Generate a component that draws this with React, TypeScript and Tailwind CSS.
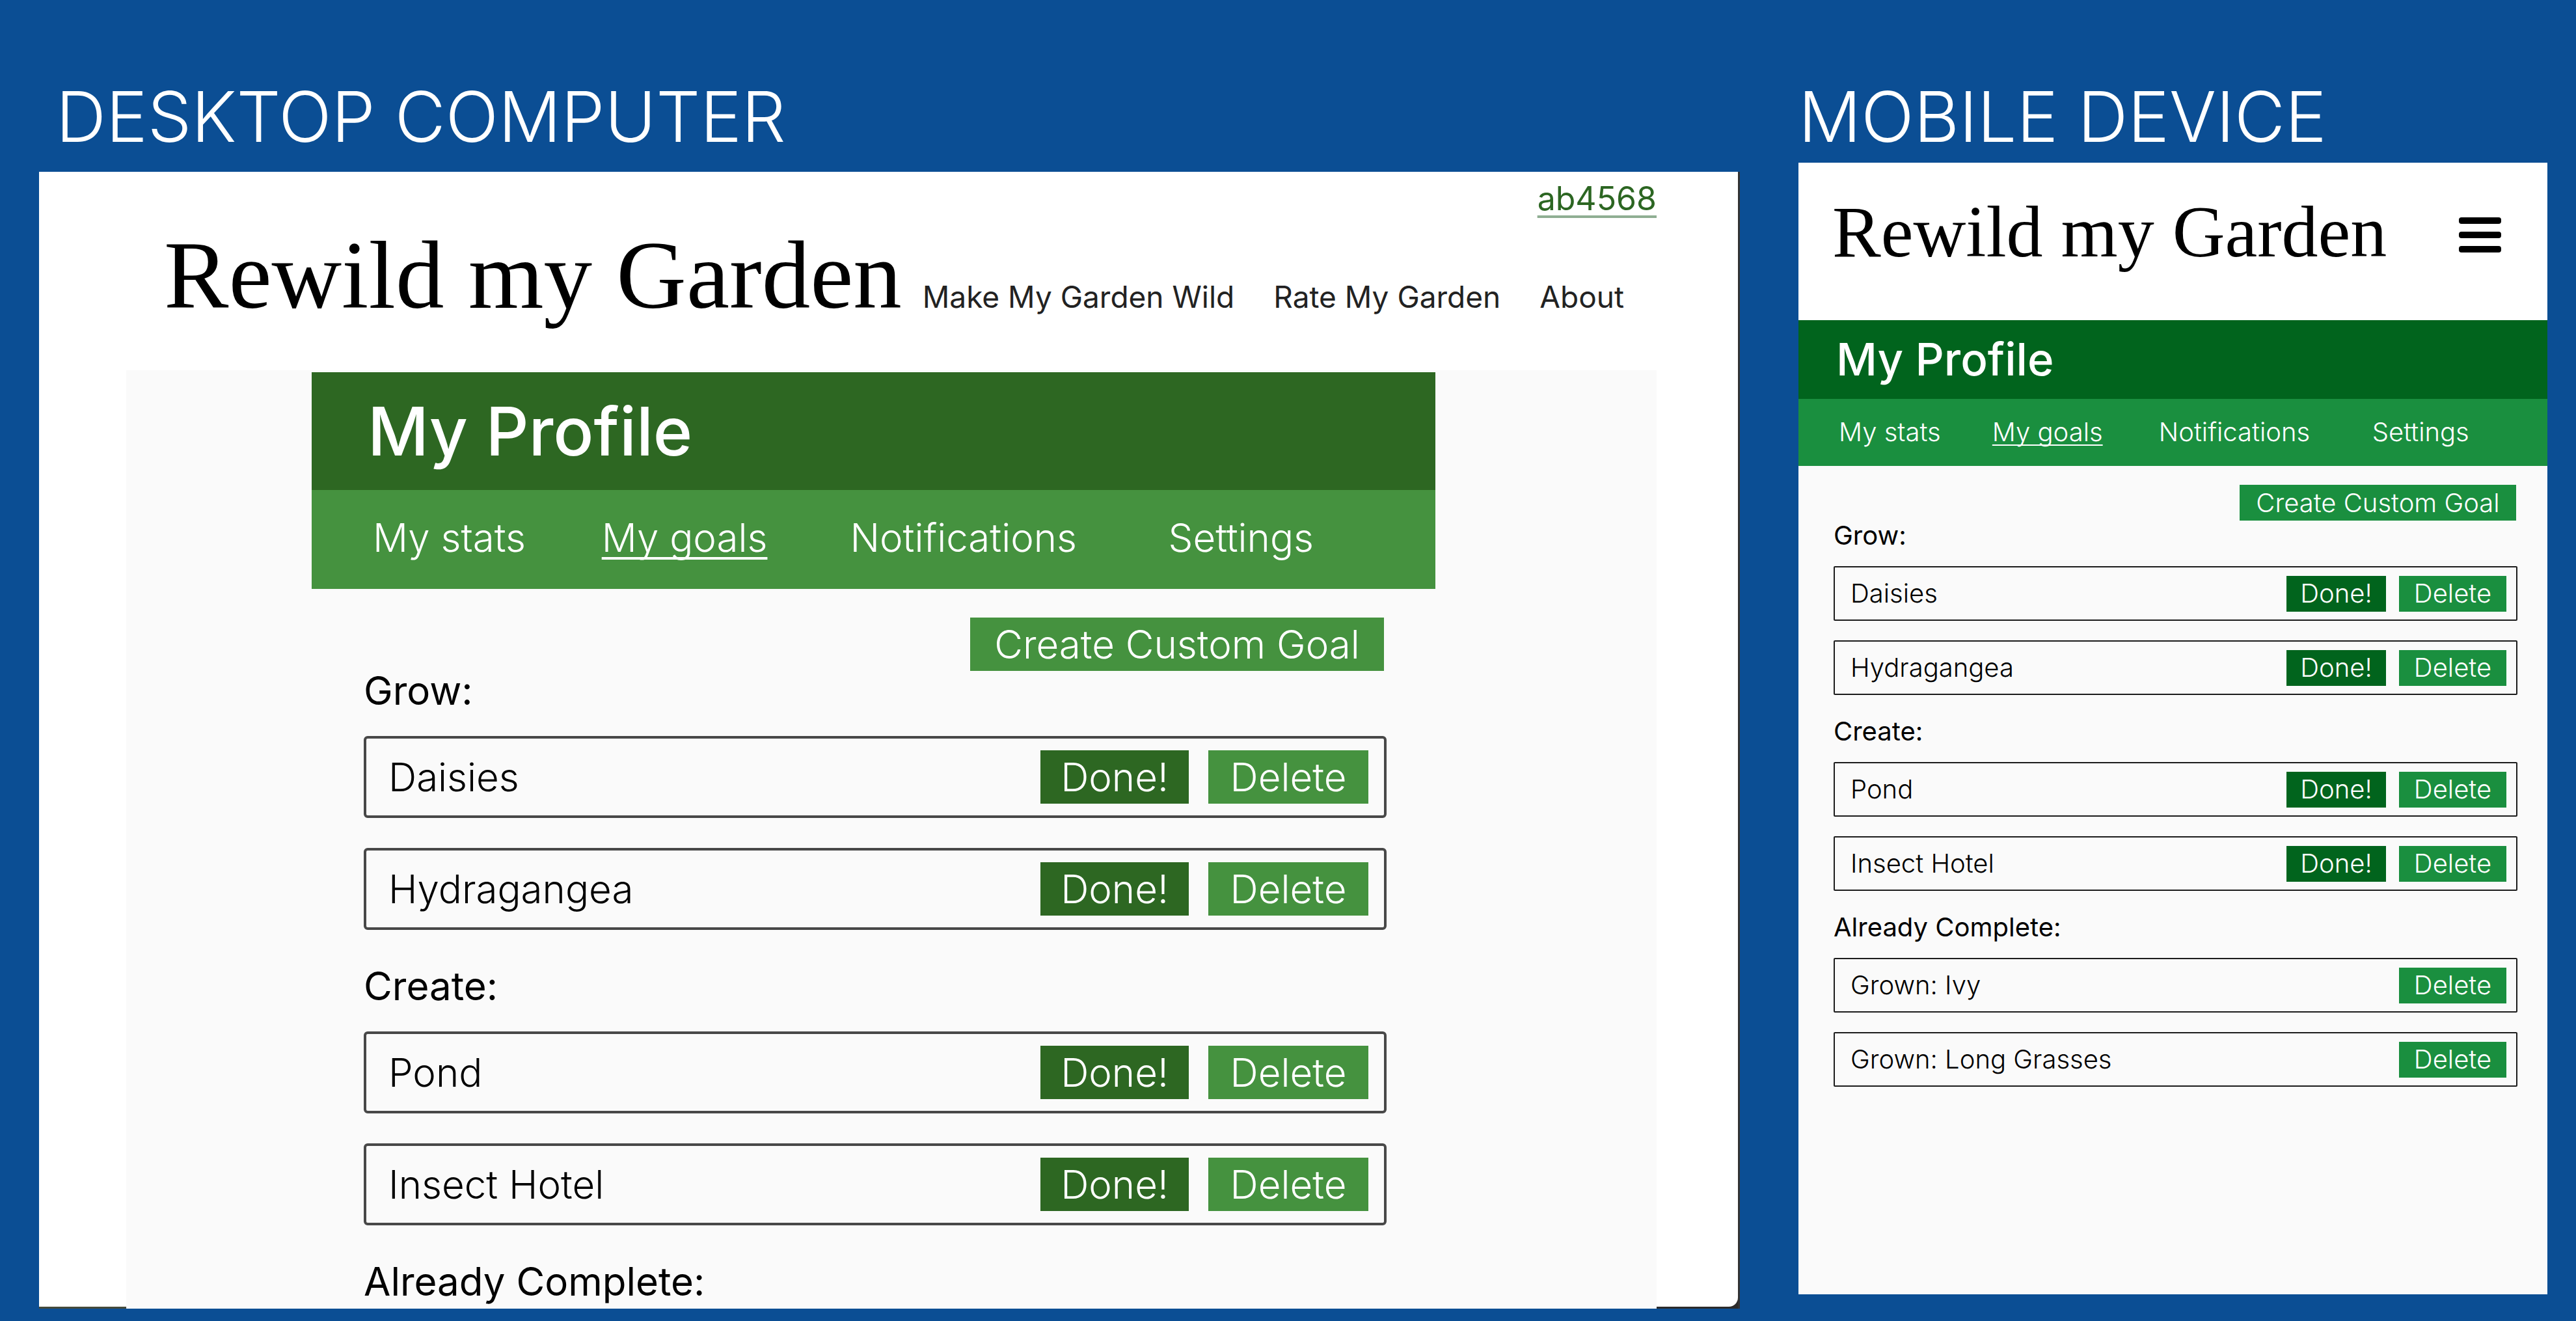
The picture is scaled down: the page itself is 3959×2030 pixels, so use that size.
import { useState } from "react";

type Goal = { name: string; complete?: boolean };
type GoalGroup = { title: string; goals: Goal[] };
type Size = "desktop" | "mobile";

const groups: GoalGroup[] = [
  { title: "Grow:", goals: [{ name: "Daisies" }, { name: "Hydragangea" }] },
  { title: "Create:", goals: [{ name: "Pond" }, { name: "Insect Hotel" }] },
];

const completed: GoalGroup = {
  title: "Already Complete:",
  goals: [
    { name: "Grown: Ivy", complete: true },
    { name: "Grown: Long Grasses", complete: true },
  ],
};

const tabs = ["My stats", "My goals", "Notifications", "Settings"];

const styles = {
  desktop: {
    title: "bg-[#2d6722] py-[30px] pl-[86px] text-[103px] leading-[121px]",
    tabs: "bg-[#45923f] pt-[43px] pb-[49px] pl-[94px] pr-[170px] text-[60px] leading-[60px]",
    underline: "underline decoration-4 underline-offset-8 [text-decoration-skip-ink:none]",
    body: "pl-[80px] pr-[75px] pt-11 pb-3 text-[60px] leading-[60px]",
    create: "mr-1 h-[82px] w-[636px] bg-[#45923f]",
    groups: "gap-14",
    group: "gap-10",
    rows: "gap-[46px]",
    row: "h-[126px] rounded-[6px] border-4 border-[#484848] pl-[34px] pr-6",
    actions: "gap-[30px]",
    done: "h-[82px] w-[228px] bg-[#2d6722]",
    remove: "h-[82px] w-[246px] bg-[#45923f]",
  },
  mobile: {
    title: "bg-[#01641d] py-5 pl-[58px] text-[69px] leading-[81px]",
    tabs: "bg-[#1a8f3f] pt-[31px] pb-8 pl-[62px] pr-[108px] text-[40px] leading-[40px]",
    underline: "underline decoration-2 underline-offset-[5px] [text-decoration-skip-ink:none]",
    body: "pl-[54px] pr-[46px] pt-[29px] text-[40px] leading-[40px]",
    create: "mr-0.5 mb-[3px] h-[55px] w-[425px] bg-[#1a8f3f]",
    groups: "gap-9",
    group: "gap-[27px]",
    rows: "gap-[30px]",
    row: "h-[84px] rounded-[2px] border-2 border-[#1c1c1c] pl-6 pr-[15px]",
    actions: "gap-5",
    done: "h-[55px] w-[153px] bg-[#01641d]",
    remove: "h-[55px] w-[165px] bg-[#1a8f3f]",
  },
};

function Profile({ size, groups }: { size: Size; groups: GoalGroup[] }) {
  const s = styles[size];
  const [active, setActive] = useState("My goals");
  return (
    <section>
      <h2 className={`font-medium text-white ${s.title}`}>My Profile</h2>
      <nav className={`grid grid-cols-[351fr_381fr_488fr_240fr] font-light whitespace-nowrap text-white ${s.tabs}`}>
        {tabs.map((tab) => (
          <a
            key={tab}
            href="#"
            onClick={() => setActive(tab)}
            className={`justify-self-start ${tab === active ? s.underline : ""}`}
          >
            {tab}
          </a>
        ))}
      </nav>
      <div className={`flex flex-col text-black ${s.body}`}>
        <button className={`self-end font-light text-white ${s.create}`}>Create Custom Goal</button>
        <div className={`flex flex-col ${s.groups}`}>
          {groups.map((group) => (
            <div key={group.title} className={`flex flex-col ${s.group}`}>
              <h3 className="font-normal">{group.title}</h3>
              {group.goals.length > 0 && (
                <ul className={`flex flex-col ${s.rows}`}>
                  {group.goals.map((goal) => (
                    <li key={goal.name} className={`flex items-center justify-between ${s.row}`}>
                      <span className="font-light">{goal.name}</span>
                      <div className={`flex font-light text-white ${s.actions}`}>
                        {!goal.complete && <button className={s.done}>Done!</button>}
                        <button className={s.remove}>Delete</button>
                      </div>
                    </li>
                  ))}
                </ul>
              )}
            </div>
          ))}
        </div>
      </div>
    </section>
  );
}

function DesktopPanel() {
  return (
    <article className="flex flex-1 flex-col border-r-[3px] border-[#333333] bg-white">
      <header className="flex flex-col pt-[11px] pr-[125px] pb-[71px] pl-[192px]">
        <a
          href="#"
          className="self-end text-[50px] leading-[60px] text-[#2c6622] underline decoration-[#8fae93] decoration-4 underline-offset-8"
        >
          ab4568
        </a>
        <div className="mt-[13px] flex items-baseline justify-between pr-[50px]">
          <h2 className="font-['Liberation_Serif',serif] text-[149px] leading-[150px] whitespace-nowrap text-black">
            Rewild my Garden
          </h2>
          <nav className="flex gap-[60px] text-[46px] leading-[60px] whitespace-nowrap text-[#222222]">
            <a href="#">Make My Garden Wild</a>
            <a href="#">Rate My Garden</a>
            <a href="#">About</a>
          </nav>
        </div>
      </header>
      <div className="flex flex-1 bg-[#2b2b2b]">
        <div className="w-[134px] border-b-[3px] border-[#444a3c] bg-white" />
        <div className="flex-1 bg-[#fafafa] pt-[3px] pr-[340px] pl-[285px]">
          <Profile size="desktop" groups={[...groups, { title: completed.title, goals: [] }]} />
        </div>
        <div className="mb-[3px] w-[125px] rounded-br-[14px] bg-white" />
      </div>
    </article>
  );
}

function MobilePanel() {
  return (
    <article className="mb-[22px] flex-1 bg-[#fafafa]">
      <header className="flex items-center justify-between bg-white pt-[50px] pr-[71px] pb-20 pl-[52px]">
        <h2 className="font-['Liberation_Serif',serif] text-[112px] leading-[112px] whitespace-nowrap text-black">
          Rewild my Garden
        </h2>
        <button aria-label="Menu" className="pt-2.5">
          <svg viewBox="0 0 65 54" className="h-[54px] w-[65px]" fill="#000000">
            <rect x="0" y="0" width="65" height="10" rx="4" />
            <rect x="0" y="22" width="65" height="10" rx="4" />
            <rect x="0" y="44" width="65" height="10" rx="4" />
          </svg>
        </button>
      </header>
      <Profile size="mobile" groups={[...groups, completed]} />
    </article>
  );
}

export default function App() {
  return (
    <main className="grid min-h-screen grid-cols-[2614fr_1151fr] gap-x-[90px] bg-[#0b4e94] pt-[126px] pr-[44px] pb-[21px] pl-[60px] font-['Inter',sans-serif]">
      <div className="flex min-w-0 flex-col">
        <h1 className="mb-8 pl-[26px] text-[107px] leading-[106px] font-light text-white">DESKTOP COMPUTER</h1>
        <DesktopPanel />
      </div>
      <div className="flex min-w-0 flex-col">
        <h1 className="mb-[18px] text-[107px] leading-[106px] font-light text-white">MOBILE DEVICE</h1>
        <MobilePanel />
      </div>
    </main>
  );
}
